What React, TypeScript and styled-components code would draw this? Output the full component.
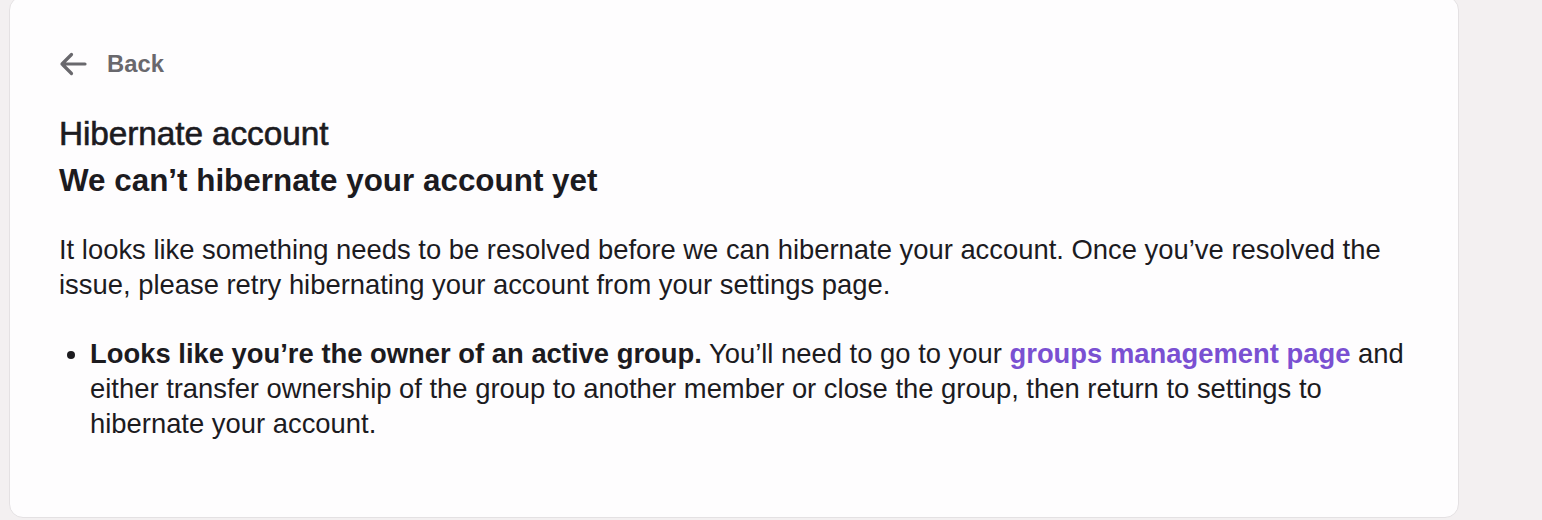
import React from "react";
import styled, { createGlobalStyle } from "styled-components";

const Global = createGlobalStyle`
  html, body {
    margin: 0;
    padding: 0;
    background: #f3f0f1;
    font-family: "Liberation Sans", Arial, Helvetica, sans-serif;
    -webkit-font-smoothing: antialiased;
  }
`;

const Page = styled.div`
  width: 1542px;
  height: 520px;
  overflow: hidden;
  padding-left: 9px;
  box-sizing: border-box;
`;

const Card = styled.section`
  width: 1450px;
  height: 522px;
  margin-top: -4px;
  box-sizing: border-box;
  background: #fefdfe;
  border: 1px solid #e4e1e3;
  border-radius: 14px;
  padding: 51px 0 0 49px;
  display: flex;
  flex-direction: column;
  color: #1c1b1f;
`;

const BackLink = styled.a`
  display: flex;
  align-items: center;
  gap: 20px;
  color: #69686d;
  font-size: 23.8px;
  font-weight: 700;
  text-decoration: none;
  height: 32px;
  cursor: pointer;
`;

const Title = styled.h1`
  margin: 34px 0 0;
  font-size: 33.4px;
  line-height: 40px;
  font-weight: 400;
  -webkit-text-stroke: 0.6px #1c1b1f;
  letter-spacing: -0.1px;
`;

const Subtitle = styled.h2`
  margin: 7px 0 0;
  font-size: 31.4px;
  line-height: 40px;
  font-weight: 700;
`;

const Paragraph = styled.p`
  margin: 31px 0 0;
  font-size: 27.4px;
  line-height: 35px;
  max-width: 1360px;
`;

const List = styled.ul`
  margin: 34px 0 0;
  padding: 0 0 0 31px;
  font-size: 27.4px;
  line-height: 35px;
  max-width: 1330px;
`;

const Item = styled.li`
  padding-left: 0;
`;

const Link = styled.a`
  color: #7a50d2;
  font-weight: 700;
  text-decoration: none;
`;

const ArrowIcon = () => (
  <svg width="28" height="24" viewBox="0 0 28 24" fill="none">
    <path
      d="M26 12H3M12.5 2.5L3 12l9.5 9.5"
      stroke="#69686d"
      strokeWidth="3.2"
      strokeLinecap="round"
      strokeLinejoin="round"
    />
  </svg>
);

export default function App() {
  return (
    <>
      <Global />
      <Page>
        <Card>
          <BackLink>
            <ArrowIcon />
            Back
          </BackLink>
          <Title>Hibernate account</Title>
          <Subtitle>We can’t hibernate your account yet</Subtitle>
          <Paragraph>
            It looks like something needs to be resolved before we can hibernate your account. Once you’ve resolved the
            issue, please retry hibernating your account from your settings page.
          </Paragraph>
          <List>
            <Item>
              <strong>Looks like you’re the owner of an active group.</strong> You’ll need to go to your{" "}
              <Link>groups management page</Link> and either transfer ownership of the group to another member or close
              the group, then return to settings to hibernate your account.
            </Item>
          </List>
        </Card>
      </Page>
    </>
  );
}
